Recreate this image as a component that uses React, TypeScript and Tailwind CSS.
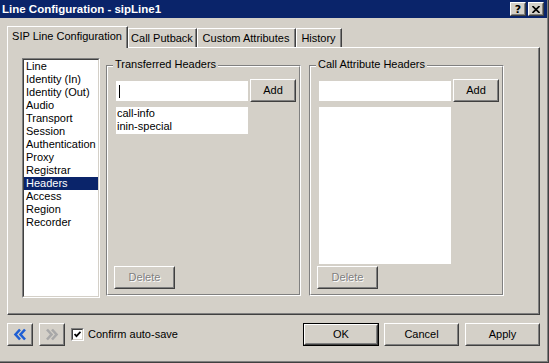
import React from "react";

function Bevel({
  className = "",
  children,
}: {
  className?: string;
  children?: React.ReactNode;
}) {
  return (
    <div
      className={`bg-[#d4d0c8] border border-t-white border-l-white border-r-[#404040] border-b-[#404040] ${className}`}
    >
      <div className="w-full h-full border border-t-[#d4d0c8] border-l-[#d4d0c8] border-r-[#808080] border-b-[#808080] flex items-center justify-center">
        {children}
      </div>
    </div>
  );
}

function Disabled({ children }: { children: React.ReactNode }) {
  return (
    <span className="text-[#808080] [text-shadow:1px_1px_0_#ffffff]">{children}</span>
  );
}

function Chevrons({ dir, color }: { dir: "left" | "right"; color: string }) {
  const paths =
    dir === "left"
      ? ["M7 1.5 L2.5 6.5 L7 11.5", "M12 1.5 L7.5 6.5 L12 11.5"]
      : ["M2 1.5 L6.5 6.5 L2 11.5", "M7 1.5 L11.5 6.5 L7 11.5"];
  return (
    <svg width="14" height="13" viewBox="0 0 14 13">
      {paths.map((d, i) => (
        <path
          key={i}
          d={d}
          fill="none"
          stroke={color}
          strokeWidth="2.6"
          strokeLinecap="butt"
          strokeLinejoin="miter"
        />
      ))}
    </svg>
  );
}

function Group({
  label,
  listHeight,
  items,
  caret,
}: {
  label: string;
  listHeight: string;
  items: string[];
  caret?: boolean;
}) {
  return (
    <div className="relative w-[195px] h-[231px] border border-t-[#808080] border-l-[#808080] border-r-white border-b-white">
      <span className="absolute -top-[8px] left-[6px] px-[2px] bg-[#d4d0c8] leading-[13px] z-10">
        {label}
      </span>
      <div className="w-full h-full border border-t-white border-l-white border-r-[#808080] border-b-[#808080] flex flex-col pl-[6px] pt-[12px] pb-[5px]">
        <div className="flex items-start gap-[2px] ml-[2px]">
          <div className="w-[132px] h-[20px] mt-[2px] bg-white flex items-center pl-[3px]">
            {caret && <div className="w-px h-[13px] bg-black" />}
          </div>
          <Bevel className="w-[46px] h-[23px]">Add</Bevel>
        </div>
        <div className={`ml-[2px] mt-[5px] w-[132px] ${listHeight} bg-white`}>
          {items.map((t) => (
            <div key={t} className="h-[13px] leading-[13px] pl-[1px]">
              {t}
            </div>
          ))}
        </div>
        <Bevel className="mt-auto w-[61px] h-[23px]">
          <Disabled>Delete</Disabled>
        </Bevel>
      </div>
    </div>
  );
}

const navItems = [
  "Line",
  "Identity (In)",
  "Identity (Out)",
  "Audio",
  "Transport",
  "Session",
  "Authentication",
  "Proxy",
  "Registrar",
  "Headers",
  "Access",
  "Region",
  "Recorder",
];

export default function App() {
  return (
    <div className="w-[549px] h-[363px] overflow-hidden bg-[#d4d0c8] border-r border-b border-r-[#404040] border-b-[#404040] font-['Liberation_Sans',Arial,sans-serif] text-[11px] text-black">
      <div className="w-full h-full border-r border-b border-r-[#808080] border-b-[#808080] flex flex-col">
        {/* Title bar */}
        <div className="h-[18px] bg-[#0a246a] flex items-center justify-between pl-[2px] pr-[3px]">
          <span className="text-white font-bold text-[11.5px] leading-[13px]">
            Line Configuration - sipLine1
          </span>
          <div className="flex gap-[2px]">
            <Bevel className="w-[16px] h-[14px]">
              <span className="font-['DejaVu_Sans',sans-serif] font-bold text-[11px] leading-[11px] text-black">
                ?
              </span>
            </Bevel>
            <Bevel className="w-[16px] h-[14px]">
              <svg width="8" height="7" viewBox="0 0 8 7">
                <path d="M0.5 0 L7.5 7 M7.5 0 L0.5 7" stroke="black" strokeWidth="1.6" />
              </svg>
            </Bevel>
          </div>
        </div>

        <div className="flex flex-col px-[7px]">
          {/* Tabs */}
          <div className="mt-[8px] h-[22px] flex items-end relative z-10">
            <div className="w-[121px] h-[22px] bg-[#d4d0c8] border-t border-l border-r border-t-white border-l-white border-r-[#404040]">
              <div className="w-full h-full border-r border-r-[#808080] flex items-center justify-center pb-[2px]">
                SIP Line Configuration
              </div>
            </div>
            {[
              { t: "Call Putback", w: "w-[69px]" },
              { t: "Custom Attributes", w: "w-[99px]" },
              { t: "History", w: "w-[46px]" },
            ].map((tab) => (
              <div
                key={tab.t}
                className={`${tab.w} h-[19px] mb-[1px] border-t border-l border-r border-t-white border-l-white border-r-[#404040]`}
              >
                <div className="w-full h-full border-r border-r-[#808080] flex items-center justify-center">
                  {tab.t}
                </div>
              </div>
            ))}
          </div>

          {/* Panel */}
          <div className="-mt-px h-[268px] border border-t-white border-l-white border-r-[#404040] border-b-[#404040]">
            <div className="w-full h-full border-r border-b border-r-[#808080] border-b-[#808080] flex items-start pl-[14px] pt-[10px]">
              {/* Nav list */}
              <div className="w-[78px] h-[240px] border border-t-[#808080] border-l-[#808080] border-r-white border-b-white">
                <div className="w-full h-full border border-t-[#404040] border-l-[#404040] border-r-[#d4d0c8] border-b-[#d4d0c8] bg-white">
                  {navItems.map((n) => (
                    <div
                      key={n}
                      className={`h-[13px] leading-[13px] pl-[2px] whitespace-nowrap ${
                        n === "Headers" ? "bg-[#0a246a] text-white" : ""
                      }`}
                    >
                      {n}
                    </div>
                  ))}
                </div>
              </div>

              <div className="ml-[6px] mt-[7px]">
                <Group
                  label="Transferred Headers"
                  listHeight="h-[27px]"
                  items={["call-info", "inin-special"]}
                  caret
                />
              </div>
              <div className="ml-[8px] mt-[7px]">
                <Group label="Call Attribute Headers" listHeight="h-[157px]" items={[]} />
              </div>
            </div>
          </div>

          {/* Bottom row */}
          <div className="mt-[8px] h-[23px] flex items-center">
            <Bevel className="w-[26px] h-[23px]">
              <Chevrons dir="left" color="#1f5fd4" />
            </Bevel>
            <Bevel className="ml-[6px] w-[26px] h-[23px]">
              <Chevrons dir="right" color="#a8a8a8" />
            </Bevel>
            <div className="ml-[6px] w-[13px] h-[13px] border border-t-[#808080] border-l-[#808080] border-r-white border-b-white">
              <div className="w-full h-full border border-t-[#404040] border-l-[#404040] border-r-[#d4d0c8] border-b-[#d4d0c8] bg-white flex items-center justify-center">
                <svg width="7" height="7" viewBox="0 0 7 7">
                  <path d="M0.5 3 L2.5 5.2 L6.5 0.8" fill="none" stroke="black" strokeWidth="1.8" />
                </svg>
              </div>
            </div>
            <span className="ml-[4px]">Confirm auto-save</span>

            <div className="ml-auto flex items-center">
              <div className="w-[76px] h-[23px] border border-black">
                <Bevel className="w-full h-full">OK</Bevel>
              </div>
              <Bevel className="ml-[5px] w-[75px] h-[23px]">Cancel</Bevel>
              <Bevel className="ml-[6px] w-[75px] h-[23px]">Apply</Bevel>
            </div>
          </div>
        </div>
      </div>
    </div>
  );
}
